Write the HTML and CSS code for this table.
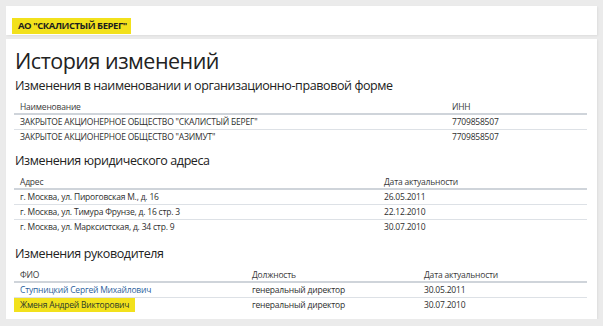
FILE: index.html
```html
<!DOCTYPE html>
<html lang="ru">
<head>
<meta charset="utf-8">
<link rel="stylesheet" href="styles.css">
</head>
<body>
<div class="topbar">
  <span class="company">АО "СКАЛИСТЫЙ БЕРЕГ"</span>
</div>
<div class="card">
  <h1 class="title">История изменений</h1>

  <h2 class="sub">Изменения в наименовании и организационно-правовой форме</h2>
  <div class="tbl t1">
    <div class="row head"><div>Наименование</div><div>ИНН</div></div>
    <div class="row"><div>ЗАКРЫТОЕ АКЦИОНЕРНОЕ ОБЩЕСТВО "СКАЛИСТЫЙ БЕРЕГ"</div><div>7709858507</div></div>
    <div class="row"><div>ЗАКРЫТОЕ АКЦИОНЕРНОЕ ОБЩЕСТВО "АЗИМУТ"</div><div>7709858507</div></div>
  </div>

  <h2 class="sub">Изменения юридического адреса</h2>
  <div class="tbl t2">
    <div class="row head"><div>Адрес</div><div>Дата актуальности</div></div>
    <div class="row"><div>г. Москва, ул. Пироговская М., д. 16</div><div>26.05.2011</div></div>
    <div class="row"><div>г. Москва, ул. Тимура Фрунзе, д. 16 стр. 3</div><div>22.12.2010</div></div>
    <div class="row"><div>г. Москва, ул. Марксистская, д. 34 стр. 9</div><div>30.07.2010</div></div>
  </div>

  <h2 class="sub sub-last">Изменения руководителя</h2>
  <div class="tbl t3">
    <div class="row head"><div>ФИО</div><div>Должность</div><div>Дата актуальности</div></div>
    <div class="row"><div><a class="link" href="#">Ступницкий Сергей Михайлович</a></div><div>генеральный директор</div><div>30.05.2011</div></div>
    <div class="row"><div class="mark-cell"><a class="link mark" href="#">Жменя Андрей Викторович</a></div><div>генеральный директор</div><div>30.07.2010</div></div>
  </div>
</div>
</body>
</html>
```
FILE: styles.css
```css
* { box-sizing: border-box; }
html, body { margin: 0; padding: 0; }
body {
  background: #ebebeb;
  padding: 6px 6px 0 6px;
  font-family: "Open Sans", "Noto Sans", sans-serif;
  color: #2e2e2e;
}
.topbar {
  background: #fff;
  height: 29px;
  padding: 6px 0 0 6px;
  box-shadow: 1px 1px 2px rgba(0,0,0,0.06);
}
.company {
  display: inline-block;
  background: #f2e11c;
  font-size: 9.5px;
  font-weight: 700;
  line-height: 16px;
  height: 16px;
  padding: 0 4px 0 6px;
  color: #1e1e1e;
  letter-spacing: -0.45px;
}
.card {
  margin-top: 4px;
  background: #fff;
  padding: 7px 10px 7px 8px;
  box-shadow: 1px 1px 2px rgba(0,0,0,0.06);
}
.title {
  margin: 0 0 0 1px;
  font-size: 21.5px;
  font-weight: 400;
  line-height: 30px;
  color: #222;
  letter-spacing: -0.5px;
}
.sub {
  margin: 7px 0 0 1px;
  font-size: 12.5px;
  font-weight: 400;
  line-height: 20px;
  color: #222;
  letter-spacing: -0.4px;
}
.title + .sub { margin-top: 0; }
.sub-last { margin-top: 10px; }
.tbl { margin-top: 5px; }
.row {
  display: grid;
  height: 15px;
  border-top: 1px solid #dde1e6;
  font-size: 8.5px;
  line-height: 14px;
  letter-spacing: -0.2px;
}
.row > div { padding-left: 6px; white-space: nowrap; }
.row.head {
  border-top: 0;
  height: 14px;
  border-bottom: 2px solid #cfd4da;
  line-height: 12px;
  color: #3a3a3a;
}
.row.head + .row { border-top: 0; height: 14px; }
.t1 .row { grid-template-columns: 432px 1fr; }
.t2 .row { grid-template-columns: 364px 1fr; }
.t3 .row { grid-template-columns: 232px 172px 1fr; }
.link { color: #2c5f9e; text-decoration: none; }
.mark-cell { padding-left: 0 !important; }
.mark {
  display: inline-block;
  background: #f2e11c;
  color: #2a3a2a;
  padding: 0 6px;
  height: 14px;
}
```
